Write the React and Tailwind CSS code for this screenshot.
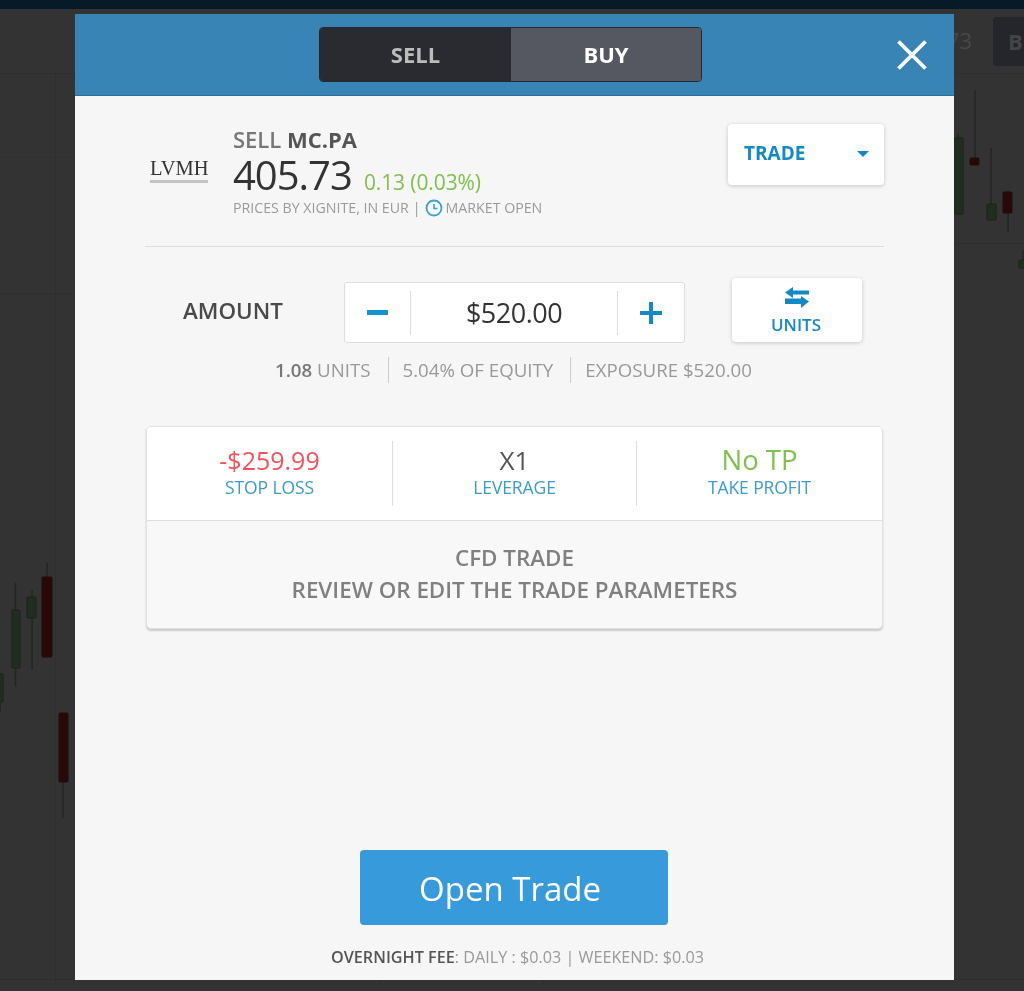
import React from "react";

const candles = [
  { x: -6, w: 9, y: 674, h: 28, wx: 0, w1: 674, w2: 713, c: "g" },
  { x: 12, w: 8, y: 610, h: 58, wx: 15.5, w1: 583, w2: 687, c: "g" },
  { x: 27, w: 9, y: 597, h: 21, wx: 32, w1: 590, w2: 670, c: "g" },
  { x: 42, w: 10, y: 577, h: 80, wx: 47, w1: 563, w2: 657, c: "r" },
  { x: 59, w: 9, y: 713, h: 69, wx: 63, w1: 713, w2: 818, c: "r" },
  { x: 954, w: 9, y: 138, h: 76, wx: 958, w1: 134, w2: 214, c: "g" },
  { x: 970, w: 9, y: 158, h: 7, wx: 975, w1: 90, w2: 165, c: "r" },
  { x: 987, w: 9, y: 204, h: 16, wx: 991, w1: 148, w2: 220, c: "g" },
  { x: 1003, w: 9, y: 192, h: 21, wx: 1008, w1: 190, w2: 233, c: "r" },
  { x: 1019, w: 9, y: 260, h: 8, wx: 1023, w1: 250, w2: 268, c: "g" },
];

function Chart() {
  return (
    <svg className="absolute inset-0" width="1024" height="991" viewBox="0 0 1024 991">
      <g stroke="#2e2e2e" strokeWidth="1">
        <line x1="0" y1="73.5" x2="1024" y2="73.5" />
        <line x1="0" y1="157.5" x2="75" y2="157.5" stroke="#303030" />
        <line x1="955" y1="243.5" x2="1024" y2="243.5" />
        <line x1="0" y1="293.5" x2="75" y2="293.5" />
        <line x1="55.5" y1="74" x2="55.5" y2="985" />
        <line x1="0" y1="979.5" x2="1024" y2="979.5" />
        <line x1="380.5" y1="980" x2="380.5" y2="985" />
        <line x1="543.5" y1="980" x2="543.5" y2="985" />
      </g>
      {candles.map((k, i) => (
        <g key={i}>
          <line x1={k.wx} x2={k.wx} y1={k.w1} y2={k.w2} stroke="#222522" strokeWidth="1.4" />
          <rect
            x={k.x}
            y={k.y}
            width={k.w}
            height={k.h}
            rx="1"
            fill={k.c === "g" ? "#1f2f1f" : "#2a0805"}
            stroke={k.c === "g" ? "#1b231b" : "#1f0e0c"}
          />
        </g>
      ))}
    </svg>
  );
}

function SwapIcon() {
  return (
    <svg width="26" height="22" viewBox="0 0 26 22" fill="#1389c6">
      <path d="M1 5.5 9 0v3.5h16v4H9V11z" />
      <path d="M1 11.5h16V9l8 5.5L17 21v-4H1z" />
    </svg>
  );
}

function ClockIcon() {
  return (
    <svg width="18" height="18" viewBox="0 0 18 18" fill="none" stroke="#3c9fd6">
      <circle cx="9" cy="9" r="7.5" strokeWidth="1.8" />
      <path d="M9 5v4.5h3.5" strokeWidth="1.6" />
    </svg>
  );
}

export default function App() {
  return (
    <div className="relative h-[991px] w-[1024px] overflow-hidden bg-[#333333] font-['Open_Sans',sans-serif]">
      <Chart />
      <div className="relative h-[9px] bg-[#071a27]" />
      <div className="relative flex h-[64px] items-center justify-end">
        <span className="mr-[21px] mt-[-2px] text-[22px] text-[#474747]">73</span>
        <div className="flex h-[49px] w-[31px] items-center rounded-l-[4px] bg-[#25262b] pl-[15px] text-[22px] font-bold text-[#444444]">
          B
        </div>
      </div>

      <div className="absolute left-[75px] top-[14px] flex h-[966px] w-[879px] flex-col bg-[#f6f6f6] [filter:blur(0.35px)]">
        <header className="flex h-[82px] shrink-0 items-center border-b border-[#2a6e99] bg-[#3784b5] pl-[244px]">
          <div className="flex h-[55px] w-[383px] overflow-hidden rounded-[4px] border border-[#25282f] text-[22px] font-bold">
            <div className="flex w-[191px] items-center justify-center bg-[#2a2b31] text-[#bcbcbc]">SELL</div>
            <div className="flex flex-1 items-center justify-center bg-[#555861] text-white">BUY</div>
          </div>
          <svg className="ml-[195px]" width="30" height="30" viewBox="0 0 30 30" stroke="#ffffff" strokeWidth="3.8">
            <path d="M1.5 1.5 28.5 28.5M28.5 1.5 1.5 28.5" />
          </svg>
        </header>

        <main className="flex flex-1 flex-col px-[70px]">
          <section className="flex h-[151px] shrink-0 border-b border-[#dddddd] pt-[28px]">
            <div className="mt-[33px] flex h-[28px] w-[88px] flex-col pl-[5px]">
              <span className="font-['Liberation_Serif',serif] text-[20.5px] leading-[22px] text-[#333333]">LVMH</span>
              <span className="mt-[1px] h-[3px] w-[58px] bg-[#c4c4c4]" />
            </div>
            <div className="flex flex-col">
              <div className="mt-[3px] text-[22px] font-semibold leading-[24px] text-[#777777]">
                SELL <span className="font-bold text-[#555555]">MC.PA</span>
              </div>
              <div className="mt-[1px] flex h-[46px] items-baseline">
                <span className="text-[40px] leading-[46px] tracking-[-1px] text-[#333333]">405.73</span>
                <span className="ml-[12px] text-[21px] tracking-[-0.1px] text-[#80c04e]">0.13 (0.03%)</span>
              </div>
              <div className="flex items-center text-[14.2px] leading-[20px] text-[#9a9a9a]">
                PRICES BY XIGNITE, IN EUR
                <span className="mx-[4px]">|</span>
                <ClockIcon />
                <span className="ml-[3px]">MARKET OPEN</span>
              </div>
            </div>
            <div className="ml-auto flex h-[61px] w-[156px] items-start justify-between rounded-[4px] bg-white px-[15px] pt-[17px] shadow-[0_1px_4px_rgba(0,0,0,0.2)]">
              <span className="pl-px text-[19px] font-bold leading-[24px] text-[#1389c6]">TRADE</span>
              <span className="mt-[10px] h-0 w-0 border-x-[6px] border-t-[6px] border-x-transparent border-t-[#1389c6]" />
            </div>
          </section>

          <section className="mt-[30px] flex h-[65px] shrink-0 items-start pl-[38px]">
            <span className="mt-[18px] w-[161px] text-[22.4px] font-semibold leading-[32px] text-[#4a4a4a]">AMOUNT</span>
            <div className="mt-[5px] flex h-[61px] w-[341px] items-center rounded-[3px] border border-[#dddddd] bg-white">
              <div className="flex h-[44px] w-[66px] items-center justify-center border-r border-[#dddddd]">
                <span className="h-[5px] w-[21px] bg-[#1394ce]" />
              </div>
              <div className="flex-1 text-center text-[27px] leading-[44px] tracking-[-0.5px] text-[#333333]">$520.00</div>
              <div className="flex h-[44px] w-[67px] items-center justify-center border-l border-[#dddddd]">
                <svg width="24" height="24" viewBox="0 0 24 24" fill="#1389c6">
                  <path d="M10 1h4v9h9v4h-9v9h-4v-9H1v-4h9z" />
                </svg>
              </div>
            </div>
            <div className="ml-[47px] mt-px flex h-[64px] w-[130px] flex-col items-center rounded-[4px] bg-white pt-[9px] shadow-[0_1px_4px_rgba(0,0,0,0.2)]">
              <SwapIcon />
              <span className="mt-[5px] pr-[2px] text-[17px] font-semibold leading-[22px] text-[#1389c6]">UNITS</span>
            </div>
          </section>

          <section className="mt-[14px] flex h-[28px] shrink-0 items-center pl-[130px] text-[18.7px] text-[#999999]">
            <span><b className="font-semibold text-[#777777]">1.08</b> UNITS</span>
            <span className="ml-[17px] mr-[14px] h-[26px] w-px bg-[#cccccc]" />
            <span>5.04% OF EQUITY</span>
            <span className="ml-[17px] mr-[14px] h-[26px] w-px bg-[#cccccc]" />
            <span>EXPOSURE $520.00</span>
          </section>

          <section className="ml-px mt-[42px] h-[203px] w-[737px] shrink-0 overflow-hidden rounded-[5px] border border-[#e2e2e2] bg-[#f8f8f8] shadow-[0_2px_2px_rgba(0,0,0,0.18)]">
            <div className="flex h-[94px] items-center border-b border-[#dddddd] bg-white">
              <div className="w-[245px] pb-[7px] text-center">
                <div className="text-[25px] leading-[34px] text-[#f0535b]">-$259.99</div>
                <div className="text-[17.5px] leading-[20px] tracking-[-0.1px] text-[#3b9ccc]">STOP LOSS</div>
              </div>
              <div className="flex h-[65px] w-[245px] flex-col justify-center border-x border-[#dddddd] pb-[7px] text-center">
                <div className="text-[26px] leading-[34px] text-[#555555]">X1</div>
                <div className="text-[17.5px] leading-[20px] tracking-[-0.1px] text-[#3b9ccc]">LEVERAGE</div>
              </div>
              <div className="flex-1 pb-[7px] text-center">
                <div className="text-[27.5px] leading-[34px] text-[#80c04e]">No TP</div>
                <div className="text-[17.5px] leading-[20px] tracking-[-0.1px] text-[#3b9ccc]">TAKE PROFIT</div>
              </div>
            </div>
            <div className="pt-[21px] text-center text-[22.4px] font-semibold leading-[32px] text-[#808080]">
              <div>CFD TRADE</div>
              <div>REVIEW OR EDIT THE TRADE PARAMETERS</div>
            </div>
          </section>

          <button className="ml-[215px] mt-[221px] h-[75px] w-[308px] shrink-0 rounded-[4px] bg-[#379ada] pr-[8px] pt-[2px] text-[33px] text-white">
            Open Trade
          </button>
          <div className="mt-[21px] pl-[6px] text-center text-[16.2px] leading-[22px] text-[#999999]">
            <b className="font-semibold text-[#555555]">OVERNIGHT FEE</b>: DAILY : $0.03 | WEEKEND: $0.03
          </div>
        </main>
      </div>
    </div>
  );
}
